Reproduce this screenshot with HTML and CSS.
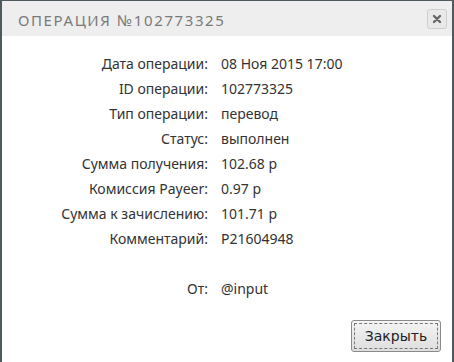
FILE: index.html
```html
<!DOCTYPE html>
<html lang="ru">
<head>
  <meta charset="UTF-8" />
  <title>Операция №102773325</title>
  <link rel="stylesheet" href="styles.css">
</head>
<body>
  <div class="dialog">
    <div class="dialog-head">
      <span class="dialog-title">Операция №102773325</span>
      <button class="close-btn" title="Закрыть">
        <svg width="10" height="10" viewBox="0 0 10 10"><path d="M2 2 L8 8 M8 2 L2 8" stroke="#666" stroke-width="2.4" stroke-linecap="round"/></svg>
      </button>
    </div>
    <div class="dialog-body">
      <div class="row"><span class="label">Дата операции:</span><span class="value">08 Ноя 2015 17:00</span></div>
      <div class="row"><span class="label">ID операции:</span><span class="value">102773325</span></div>
      <div class="row"><span class="label">Тип операции:</span><span class="value">перевод</span></div>
      <div class="row"><span class="label">Статус:</span><span class="value">выполнен</span></div>
      <div class="row"><span class="label">Сумма получения:</span><span class="value">102.68 р</span></div>
      <div class="row"><span class="label">Комиссия Payeer:</span><span class="value">0.97 р</span></div>
      <div class="row"><span class="label">Сумма к зачислению:</span><span class="value">101.71 р</span></div>
      <div class="row"><span class="label">Комментарий:</span><span class="value">P21604948</span></div>
      <div class="row row-gap"><span class="label">От:</span><span class="value">@input</span></div>
    </div>
    <div class="dialog-foot">
      <button class="btn-close">Закрыть</button>
    </div>
  </div>
</body>
</html>
```

FILE: styles.css
```css
html, body {
  margin: 0;
  padding: 0;
  background: #fff;
}
body {
  font-family: 'Noto Sans', 'DejaVu Sans', sans-serif;
  color: #333;
}
.dialog {
  width: 454px;
  height: 362px;
  box-sizing: border-box;
  border: 2px solid #4e5a5e;
  border-bottom: none;
  border-top-width: 1px;
  display: flex;
  flex-direction: column;
  background: #fff;
}
.dialog-head {
  height: 35px;
  background: #eeeeee;
  display: flex;
  align-items: center;
  justify-content: space-between;
  padding: 0 5px 0 16px;
}
.dialog-title {
  text-transform: uppercase;
  font-size: 15px;
  letter-spacing: 1.6px;
  color: #7a7a7a;
  padding-top: 2px;
}
.close-btn {
  width: 20px;
  height: 20px;
  padding: 0;
  border: 1px solid #cfcfcf;
  border-radius: 3px;
  background: #e9e9e9;
  display: flex;
  align-items: center;
  justify-content: center;
}
.dialog-body {
  padding-top: 15px;
  flex: 1;
}
.row {
  display: flex;
  height: 25px;
  align-items: center;
  font-size: 14px;
}
.row-gap {
  margin-top: 25px;
}
.label {
  width: 206px;
  text-align: right;
  padding-right: 13px;
}
.value {
  color: #333;
}
.dialog-foot {
  display: flex;
  justify-content: flex-end;
  padding: 0 11px 10px 0;
}
.btn-close {
  width: 90px;
  height: 32px;
  font-family: 'DejaVu Sans', sans-serif;
  font-size: 14px;
  color: #222;
  border: 1px solid #8a8a8a;
  border-radius: 3px;
  background: linear-gradient(#f4f4f4, #dedede);
  outline: 1px dashed #777;
  outline-offset: -4px;
}
```
